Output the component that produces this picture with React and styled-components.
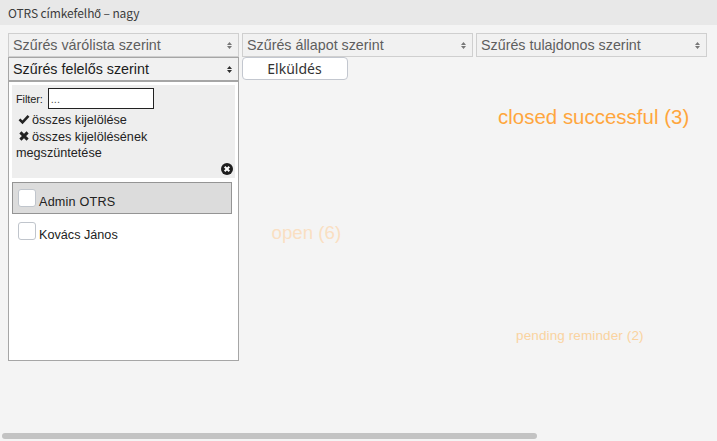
import React from "react";
import styled, { createGlobalStyle } from "styled-components";

const GlobalStyle = createGlobalStyle`
  * { box-sizing: border-box; }
  body { margin: 0; background: #f4f4f4; font-family: "Liberation Sans", Arial, sans-serif; overflow: hidden; }
`;

const Page = styled.div`
  position: relative;
  height: 441px;
  display: flex;
  flex-direction: column;
`;

const Header = styled.header`
  height: 25px;
  padding-left: 8px;
  background: #e8e8e8;
  color: #3c3c3c;
  font: 12px/25px "Noto Sans CJK SC", sans-serif;
  letter-spacing: -0.1px;
  white-space: nowrap;
`;

const Filters = styled.div`
  display: grid;
  grid-template-columns: repeat(3, 231px);
  grid-template-rows: 24px auto;
  column-gap: 3px;
  padding: 8px 0 0 8px;
`;

const Select = styled.button`
  display: flex;
  align-items: center;
  justify-content: space-between;
  width: 231px;
  height: 24px;
  padding: 0 6px 0 4px;
  border: 1px solid ${(p) => (p.$active ? "#a6a6a6" : "#cfcfcf")};
  border-radius: 0;
  background: #f1f1f1;
  color: ${(p) => (p.$active ? "#1c1c1c" : "#5e5e5e")};
  font: 14.3px/22px "Liberation Sans", Arial, sans-serif;
`;

const SortIcon = styled.svg`
  display: block;
  width: 5px;
  height: 7px;
  margin-top: 1px;
  fill: ${(p) => (p.$active ? "#2e2e2e" : "#777")};
`;

const Submit = styled.button`
  width: 106px;
  height: 23px;
  padding: 0 1px 0 0;
  border: 1px solid #c3c7cf;
  border-radius: 4px;
  background: #fff;
  color: #333;
  font: 14px/20px "Noto Sans", sans-serif;
`;

const Panel = styled.div`
  width: 231px;
  height: 280px;
  padding: 4px 3px;
  border: 1px solid #a6a6a6;
  background: #fff;
  color: #222;
  font-size: 12.65px;
`;

const Tools = styled.div`
  display: flex;
  flex-direction: column;
  height: 93px;
  width: 223px;
  margin-top: -1px;
  padding: 3px 2px 3px 4px;
  background: #eee;
`;

const FilterRow = styled.label`
  display: flex;
  align-items: center;
  gap: 5px;
  height: 21px;
  margin-bottom: 3px;
  font-size: 11px;
  letter-spacing: -0.1px;
`;

const Input = styled.input`
  width: 106px;
  height: 21px;
  padding: 0 2px;
  border: 1px solid #222;
  background: #fff;
  color: #555;
  font: 11px "Liberation Sans", Arial, sans-serif;
`;

const Action = styled.div`
  line-height: 17px;
  height: ${(p) => p.$height || 17}px;
  white-space: nowrap;
`;

const ActionIcon = styled.svg`
  width: 12px;
  height: 12px;
  margin: 0 2px 0 2px;
  vertical-align: -1px;
`;

const CloseIcon = styled.svg`
  flex: none;
  width: 12px;
  height: 12px;
  margin-top: auto;
  align-self: flex-end;
`;

const Option = styled.label`
  display: flex;
  align-items: flex-start;
  gap: 3px;
  width: 220px;
  height: ${(p) => (p.$selected ? 32 : 33)}px;
  margin-top: ${(p) => (p.$selected ? 4 : 0)}px;
  padding: 6px 5px;
  border: 1px solid ${(p) => (p.$selected ? "#949494" : "transparent")};
  background: ${(p) => (p.$selected ? "#dcdcdc" : "transparent")};
`;

const Check = styled.span`
  width: 18px;
  height: 18px;
  margin-top: ${(p) => p.$offset || 0}px;
  border: 1px solid #c0c5cc;
  border-radius: 3px;
  background: #fff;
`;

const OptionText = styled.span`
  line-height: 15px;
  padding-top: ${(p) => p.$top}px;
  letter-spacing: ${(p) => p.$spacing || 0}px;
`;

const CloudTag = styled.span`
  position: absolute;
  left: ${(p) => p.$x}px;
  top: ${(p) => p.$y}px;
  color: ${(p) => p.$color};
  font-size: ${(p) => p.$size}px;
  line-height: 24px;
  letter-spacing: ${(p) => p.$spacing || 0}px;
  white-space: nowrap;
`;

const Scrollbar = styled.div`
  width: 535px;
  height: 6px;
  margin: auto 0 2px 2px;
  border-radius: 3px;
  background: #c3c3c3;
`;

function FilterSelect({ label, active }) {
  return (
    <Select $active={active}>
      {label}
      <SortIcon $active={active} viewBox="0 0 5 7">
        <path d="M2.5 0 5 3H0ZM0 4h5L2.5 7Z" />
      </SortIcon>
    </Select>
  );
}

export default function App() {
  return (
    <Page>
      <GlobalStyle />
      <Header>OTRS címkefelhő – nagy</Header>
      <Filters>
        <FilterSelect label="Szűrés várólista szerint" />
        <FilterSelect label="Szűrés állapot szerint" />
        <FilterSelect label="Szűrés tulajdonos szerint" />
        <div>
          <FilterSelect label="Szűrés felelős szerint" active />
          <Panel>
            <Tools>
              <FilterRow>
                Filter:
                <Input defaultValue="..." />
              </FilterRow>
              <Action>
                <ActionIcon viewBox="0 0 12 12">
                  <path d="m1.5 6.4 3 3 6-6.5" fill="none" stroke="#222" strokeWidth="2.6" />
                </ActionIcon>
                összes kijelölése
              </Action>
              <Action $height={16}>
                <ActionIcon viewBox="0 0 12 12">
                  <path d="m2.4 2.4 7.2 7.2m0-7.2L2.4 9.6" fill="none" stroke="#222" strokeWidth="3" />
                </ActionIcon>
                összes kijelölésének
              </Action>
              <Action>megszüntetése</Action>
              <CloseIcon viewBox="0 0 12 12">
                <circle cx="6" cy="6" r="6" fill="#1e1e1e" />
                <path d="m3.7 3.7 4.6 4.6m0-4.6L3.7 8.3" fill="none" stroke="#fff" strokeWidth="2" />
              </CloseIcon>
            </Tools>
            <Option $selected>
              <Check />
              <OptionText $top={6} $spacing={0.2}>Admin OTRS</OptionText>
            </Option>
            <Option>
              <Check $offset={1} />
              <OptionText $top={7}>Kovács János</OptionText>
            </Option>
          </Panel>
        </div>
        <Submit>Elküldés</Submit>
      </Filters>
      <CloudTag $x={498} $y={105} $size={20.4} $spacing={0.04} $color="#ffa63d">closed successful (3)</CloudTag>
      <CloudTag $x={271.5} $y={221} $size={18.7} $color="#fadfc2">open (6)</CloudTag>
      <CloudTag $x={516} $y={324} $size={13.5} $spacing={0.12} $color="#fad3a0">pending reminder (2)</CloudTag>
      <Scrollbar />
    </Page>
  );
}
